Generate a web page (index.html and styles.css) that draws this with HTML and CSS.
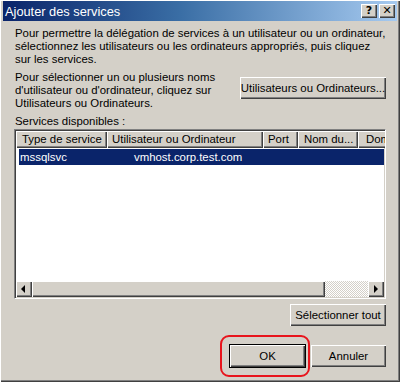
FILE: index.html
```html
<!DOCTYPE html>
<html lang="fr">
<head>
    <meta charset="UTF-8">
    <title>Ajouter des services</title>
    <link rel="stylesheet" href="styles.css">
</head>
<body>
    <div class="window">
        <div class="titlebar">
            <span class="title">Ajouter des services</span>
            <div class="caption-buttons">
                <span class="caption-btn">?</span>
                <span class="caption-btn">&#x2715;</span>
            </div>
        </div>

        <div class="content">
            <p class="intro">Pour permettre la délégation de services à un utilisateur ou un ordinateur,<br>sélectionnez les utilisateurs ou les ordinateurs appropriés, puis cliquez<br>sur les services.</p>

            <div class="pick-row">
                <p class="pick-text">Pour sélectionner un ou plusieurs noms<br>d'utilisateur ou d'ordinateur, cliquez sur<br>Utilisateurs ou Ordinateurs.</p>
                <button class="btn btn-pick">Utilisateurs ou Ordinateurs...</button>
            </div>

            <div class="list-label">Services disponibles :</div>

            <div class="listview">
                <div class="list-header">
                    <span class="col col-type">Type de service</span>
                    <span class="col col-user">Utilisateur ou Ordinateur</span>
                    <span class="col col-port">Port</span>
                    <span class="col col-name">Nom du...</span>
                    <span class="col col-dom">Dom</span>
                </div>
                <div class="list-body">
                    <div class="list-row selected">
                        <span class="cell-type">mssqlsvc</span>
                        <span class="cell-user">vmhost.corp.test.com</span>
                    </div>
                </div>
                <div class="hscroll">
                    <span class="scroll-btn">
                        <svg width="16" height="16" viewBox="0 0 16 16"><path d="M5 8 L9 4 L9 12 Z" fill="#000"/></svg>
                    </span>
                    <span class="scroll-thumb"></span>
                    <span class="scroll-track"></span>
                    <span class="scroll-btn">
                        <svg width="16" height="16" viewBox="0 0 16 16"><path d="M10 8 L6 4 L6 12 Z" fill="#000"/></svg>
                    </span>
                </div>
            </div>

            <div class="select-row">
                <button class="btn btn-select">Sélectionner tout</button>
            </div>

            <div class="footer">
                <div class="ok-wrap">
                    <button class="btn btn-dialog btn-default">OK</button>
                    <span class="highlight-ring"></span>
                </div>
                <button class="btn btn-dialog">Annuler</button>
            </div>
        </div>
    </div>
</body>
</html>
```

FILE: styles.css
```css
body {
    margin: 0;
    font-family: "Liberation Sans", Arial, sans-serif;
    font-size: 11.4px;
    color: #000;
    background-color: #d4d0c8;
}

.window {
    width: 400px;
    height: 382px;
    box-sizing: border-box;
    padding: 1px 3px 3px 3px;
    background-color: #d4d0c8;
    box-shadow: inset 1px 1px #ffffff, inset -1px -1px #404040, inset -2px -2px #808080;
    display: flex;
    flex-direction: column;
}

.titlebar {
    height: 20px;
    display: flex;
    align-items: center;
    justify-content: space-between;
    padding: 0 2px 0 2px;
    background: linear-gradient(to right, #0a246a 0%, #3a6ea5 45%, #a6caf0 100%);
}

.title {
    color: white;
    font-size: 12.8px;
}

.caption-buttons {
    display: flex;
    gap: 2px;
}

.caption-btn {
    width: 16px;
    height: 14px;
    box-sizing: border-box;
    background-color: #d4d0c8;
    box-shadow: inset 1px 1px #ffffff, inset -1px -1px #404040, inset -2px -2px #808080;
    font-family: "DejaVu Sans", sans-serif;
    font-weight: bold;
    font-size: 11px;
    line-height: 14px;
    text-align: center;
}

.content {
    flex: 1;
    padding: 6px 11px 0 11px;
    display: flex;
    flex-direction: column;
}

.intro,
.pick-text {
    margin: 0;
    line-height: 13px;
    padding-left: 1px;
}

.pick-row {
    display: flex;
    justify-content: space-between;
    align-items: flex-start;
    margin-top: 5px;
}

.btn {
    font-family: "Liberation Sans", Arial, sans-serif;
    font-size: 11.4px;
    color: #000;
    height: 22px;
    padding: 0;
    border: none;
    white-space: nowrap;
    background-color: #d4d0c8;
    box-shadow: inset 1px 1px #ffffff, inset -1px -1px #404040, inset -2px -2px #808080;
}

.btn-pick {
    width: 146px;
    margin-top: 6px;
}

.list-label {
    margin-top: 5px;
    line-height: 13px;
    padding-left: 1px;
}

.listview {
    margin-top: 1px;
    height: 170px;
    box-sizing: border-box;
    border: 1px solid;
    border-color: #808080 #ffffff #ffffff #808080;
    box-shadow: inset 1px 1px #404040, inset -1px -1px #d4d0c8;
    padding: 1px;
    background-color: white;
    display: flex;
    flex-direction: column;
    overflow: hidden;
}

.list-header {
    display: flex;
    height: 17px;
    flex-shrink: 0;
    white-space: nowrap;
}

.col {
    box-sizing: border-box;
    height: 17px;
    line-height: 16px;
    padding-left: 6px;
    background-color: #d4d0c8;
    box-shadow: inset 1px 1px #ffffff, inset -1px -1px #404040, inset -2px -2px #808080;
    flex-shrink: 0;
    overflow: hidden;
}

.col-type { width: 91px; }
.col-user { width: 156px; padding-left: 5px; }
.col-port { width: 35px; padding-left: 5px; }
.col-name { width: 60px; }
.col-dom { width: 60px; padding-left: 8px; }

.list-body {
    flex: 1;
    padding: 1px 0 0 3px;
}

.list-row {
    display: flex;
    height: 16px;
    line-height: 16px;
    white-space: nowrap;
}

.list-row.selected {
    background-color: #0a246a;
    color: white;
}

.cell-type {
    width: 114px;
    padding-left: 1px;
}

.hscroll {
    display: flex;
    height: 16px;
    flex-shrink: 0;
}

.scroll-btn,
.scroll-thumb {
    box-sizing: border-box;
    height: 16px;
    background-color: #d4d0c8;
    box-shadow: inset 1px 1px #ffffff, inset -1px -1px #404040, inset -2px -2px #808080;
}

.scroll-btn {
    width: 16px;
}

.scroll-btn svg {
    display: block;
}

.scroll-thumb {
    width: 293px;
}

.scroll-track {
    flex: 1;
    background-color: #ece9e2;
    background-image: conic-gradient(#ffffff 25%, #d4d0c8 0 50%, #ffffff 0 75%, #d4d0c8 0);
    background-size: 2px 2px;
}

.select-row {
    display: flex;
    justify-content: flex-end;
    margin-top: 5px;
}

.btn-select {
    width: 96px;
}

.footer {
    display: flex;
    justify-content: flex-end;
    gap: 6px;
    margin-top: 19px;
}

.ok-wrap {
    position: relative;
}

.btn-dialog {
    width: 75px;
    display: block;
}

.btn-default {
    box-shadow: 0 0 0 1px #000, inset 1px 1px #ffffff, inset -1px -1px #404040, inset -2px -2px #808080;
}

.highlight-ring {
    position: absolute;
    left: -10px;
    top: -10px;
    width: 90px;
    height: 42px;
    box-sizing: border-box;
    border: 2px solid #e8141c;
    border-radius: 9px;
}
```
